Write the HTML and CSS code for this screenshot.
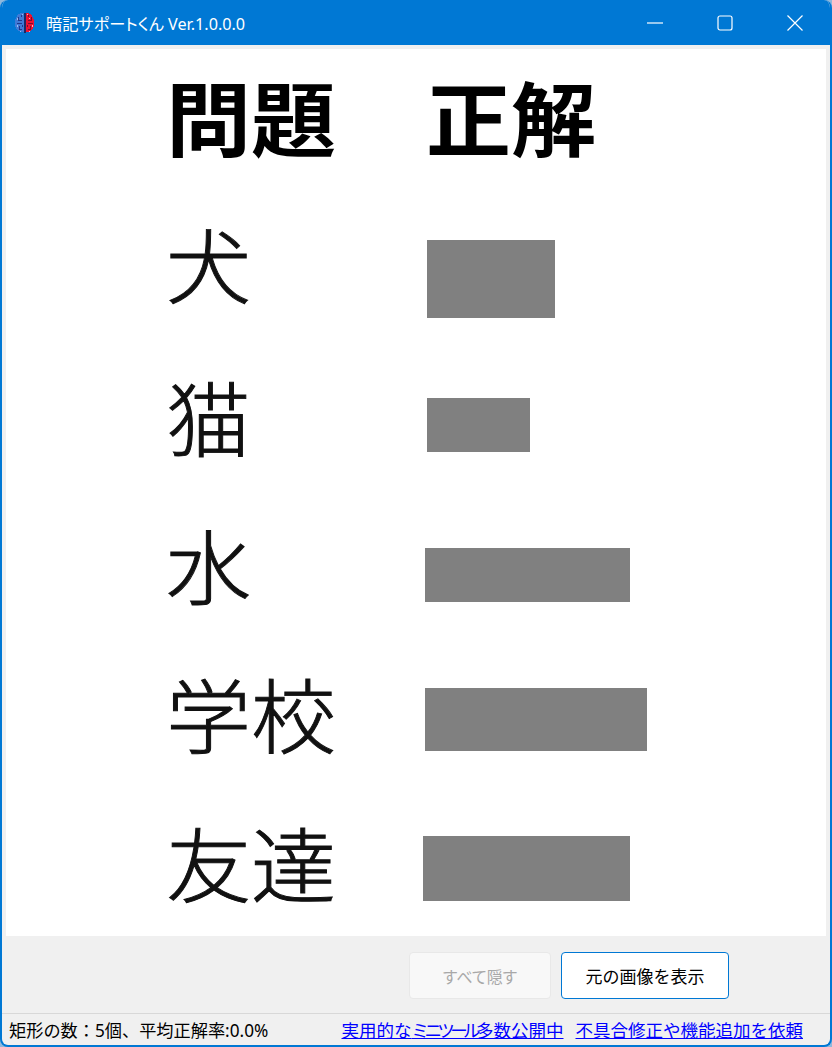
FILE: index.html
```html
<!DOCTYPE html>
<html lang="ja">
  <head>
    <meta charset="UTF-8" />
    <meta name="viewport" content="width=device-width, initial-scale=1.0" />
    <title>暗記サポートくん Ver.1.0.0.0</title>
    <link rel="stylesheet" href="styles.css">
  </head>
  <body>
    <div class="window">
      <!-- Title bar -->
      <div class="titlebar">
        <svg class="app-icon" viewBox="0 0 22 22" width="22" height="22" shape-rendering="crispEdges">
          <path d="M10 1H6v1H4v1H3v2H2v2H1v8h1v2h1v1h1v1h2v1h4z" fill="#3f7ad6" />
          <path d="M11 1h4v1h2v1h1v2h1v2h1v8h-1v2h-1v1h-1v1h-2v1h-4z" fill="#ee1030" />
          <path d="M10 1h2v20h-2z" fill="#1a2a66" />
          <path d="M4 5h1v3h3v1H4zM7 3h1v2H7zM3 11h5v1H3zM5 14h1v3h2v1H5zM8 13h1v2H8z" fill="#20388c" />
          <path d="M17 5h1v4h-4V8h3zM14 3h1v2h-1zM14 11h5v1h-5zM16 14h1v4h-3v-1h2zM13 13h1v2h-1z" fill="#7a0c30" />
          <path d="M3 6h1v2H3zM8 2h1v1H8zM3 13h1v2H3zM6 19h1v1H6z" fill="#9cc0f0" />
          <path d="M13 2h1v1h-1zM15 6h1v1h-1zM18 13h1v2h-1zM15 19h1v1h-1z" fill="#ffb0c0" />
        </svg>
        <span class="app-title">暗記サポートくん Ver.1.0.0.0</span>
        <div class="window-controls">
          <svg viewBox="0 0 16 16" width="16" height="16"><path d="M0 8h16" stroke="#fff" stroke-width="1.2" fill="none" /></svg>
          <svg viewBox="0 0 16 16" width="16" height="16"><rect x="1" y="1" width="14" height="14" rx="2" stroke="#fff" stroke-width="1.2" fill="none" /></svg>
          <svg viewBox="0 0 16 16" width="16" height="16"><path d="M.5.500l15 15M15.500.500l-15 15" stroke="#fff" stroke-width="1.2" fill="none" /></svg>
        </div>
      </div>

      <!-- Image area -->
      <div class="canvas">
        <div class="row row-head">
          <span class="question">問題</span>
          <span class="answer-head">正解</span>
        </div>
        <div class="row row-dog">
          <span class="question">犬</span>
          <div class="mask mask-dog"></div>
        </div>
        <div class="row row-cat">
          <span class="question">猫</span>
          <div class="mask mask-cat"></div>
        </div>
        <div class="row">
          <span class="question">水</span>
          <div class="mask mask-water"></div>
        </div>
        <div class="row">
          <span class="question">学校</span>
          <div class="mask mask-school"></div>
        </div>
        <div class="row">
          <span class="question">友達</span>
          <div class="mask mask-friend"></div>
        </div>
      </div>

      <!-- Buttons -->
      <div class="actions">
        <button type="button" class="btn btn-hide" disabled>すべて隠す</button>
        <button type="button" class="btn btn-show">元の画像を表示</button>
      </div>

      <!-- Status bar -->
      <div class="statusbar">
        <span class="status-text">矩形の数：5個、平均正解率:0.0%</span>
        <a class="link link-tools" href="#">実用的な<span class="narrow-kana">ミニツール</span>多数公開中</a>
        <a class="link" href="#">不具合修正や機能追加を依頼</a>
      </div>
    </div>
  </body>
</html>
```

FILE: styles.css
```css
* {
  box-sizing: border-box;
}
html,
body {
  height: 100%;
}
body {
  margin: 0;
  background: #8fb8dc;
  font-family: "Noto Sans", "Noto Sans CJK JP", sans-serif;
  color: #000;
  overflow: hidden;
}
.window {
  height: 1047px;
  display: flex;
  flex-direction: column;
  background: #f0f0f0;
  border: 2px solid #0078d4;
  border-top: none;
  border-radius: 8px;
  overflow: hidden;
}
.titlebar {
  height: 45px;
  flex: none;
  margin: 0 -2px;
  padding-left: 14px;
  display: flex;
  align-items: center;
  background: #0078d4;
  color: #fff;
}
.app-icon {
  flex: none;
}
.app-title {
  margin-left: 10px;
  font-size: 16.200px;
  font-feature-settings: "palt";
}
.window-controls {
  margin-left: auto;
  padding-right: 29px;
  display: flex;
  gap: 54px;
}
.canvas {
  height: 887px;
  flex: none;
  margin: 4px 4px 0;
  padding-top: 24px;
  background: #fff;
  font-family: "Noto Sans CJK JP", sans-serif;
}
.row {
  height: 149px;
  padding-left: 160px;
  display: flex;
  align-items: flex-start;
}
.row-head {
  height: 147px;
}
.row-dog {
  height: 153px;
}
.row-cat {
  height: 148px;
}
.question,
.answer-head {
  font-size: 85px;
  font-weight: 300;
  line-height: 84px;
  color: #111;
  -webkit-text-stroke: 1px #111;
  filter: blur(0.7px);
  transform: scaleY(0.95);
}
.question {
  width: 260px;
  flex: none;
}
.row-head .question,
.answer-head {
  font-size: 85px;
  font-weight: 700;
  color: #000;
  -webkit-text-stroke: 0;
}
.mask {
  background: #808080;
}
.mask-dog {
  width: 128px;
  height: 78px;
  margin: 20px 0 0 1px;
}
.mask-cat {
  width: 103px;
  height: 54px;
  margin: 25px 0 0 1px;
}
.mask-water {
  width: 205px;
  height: 54px;
  margin: 27px 0 0 -1px;
}
.mask-school {
  width: 222px;
  height: 63px;
  margin: 18px 0 0 -1px;
}
.mask-friend {
  width: 207px;
  height: 65px;
  margin: 17px 0 0 -3px;
}
.actions {
  flex: 1;
  padding: 16px 101px 0 0;
  display: flex;
  justify-content: flex-end;
  gap: 10px;
}
.btn {
  height: 47px;
  padding: 0;
  border-radius: 4px;
  font-family: inherit;
  font-size: 17px;
  background: #fff;
  color: #000;
}
.btn-hide {
  width: 142px;
  font-size: 16px;
  font-feature-settings: "palt";
  background: #f8f8f8;
  border: 1px solid #e8e8e8;
  color: #a8a8a8;
}
.btn-show {
  width: 168px;
  border: 1px solid #0078d4;
}
.statusbar {
  height: 32px;
  flex: none;
  padding: 0 27px 0 7px;
  display: flex;
  align-items: center;
  border-top: 1px solid #d8d8d8;
  font-size: 17.200px;
  white-space: nowrap;
}
.link {
  margin-left: 12px;
  font-size: 17.500px;
  color: #0000ff;
  text-decoration: underline;
}
.link-tools {
  margin-left: auto;
}
.narrow-kana {
  letter-spacing: -4.600px;
}
```
